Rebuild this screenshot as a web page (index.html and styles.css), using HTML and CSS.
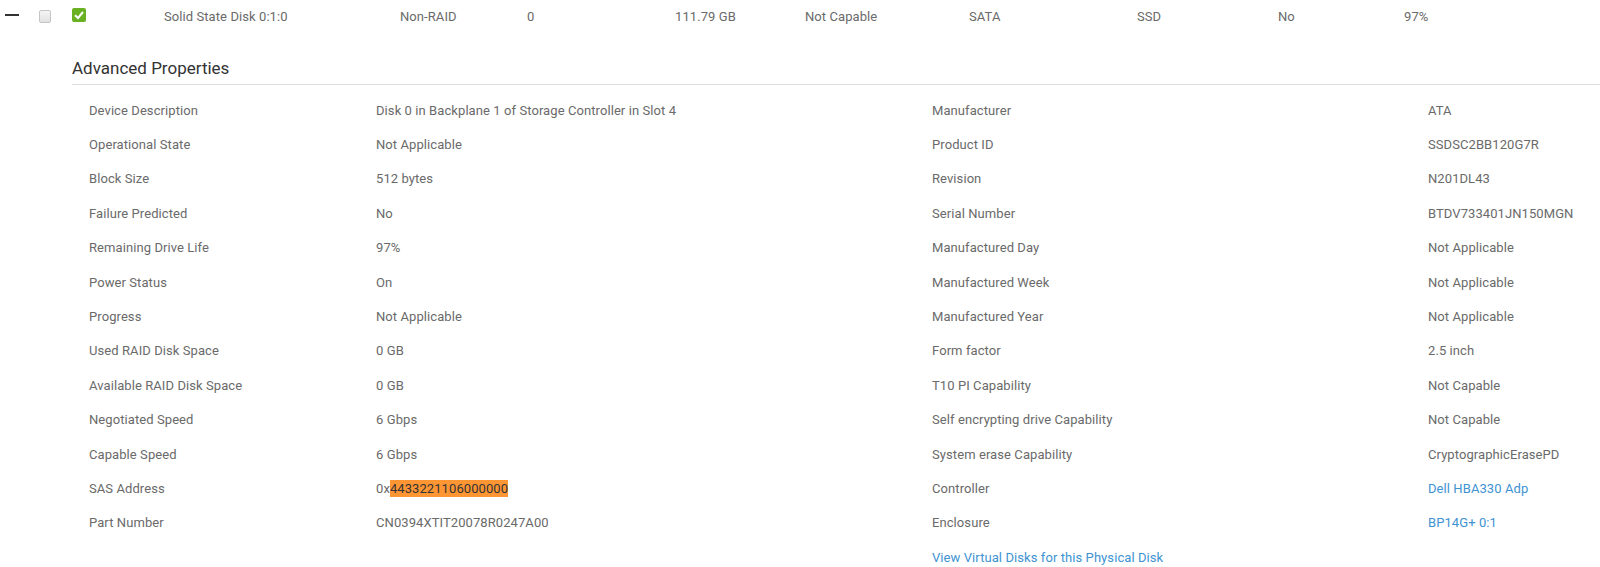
FILE: index.html
```html
<!DOCTYPE html>
<html>
<head>
<meta charset="utf-8">
<link rel="stylesheet" href="styles.css">
</head>
<body>
<div class="disk-row">
  <span class="cell"><span class="collapse"></span></span>
  <span class="cell"><span class="cb"></span></span>
  <span class="cell"><span class="ok"><svg width="14" height="14" viewBox="0 0 14 14"><path d="M3 7.2 L6 10 L11 4" fill="none" stroke="#fff" stroke-width="2"/></svg></span></span>
  <span class="cell">Solid State Disk 0:1:0</span>
  <span class="cell">Non-RAID</span>
  <span class="cell">0</span>
  <span class="cell">111.79 GB</span>
  <span class="cell">Not Capable</span>
  <span class="cell">SATA</span>
  <span class="cell">SSD</span>
  <span class="cell">No</span>
  <span class="cell">97%</span>
</div>
<section class="adv">
  <h2 class="adv-title">Advanced Properties</h2>
  <div class="props">
    <div class="k">Device Description</div><div class="v">Disk 0 in Backplane 1 of Storage Controller in Slot 4</div><div class="k">Manufacturer</div><div class="v">ATA</div>
    <div class="k">Operational State</div><div class="v">Not Applicable</div><div class="k">Product ID</div><div class="v">SSDSC2BB120G7R</div>
    <div class="k">Block Size</div><div class="v">512 bytes</div><div class="k">Revision</div><div class="v">N201DL43</div>
    <div class="k">Failure Predicted</div><div class="v">No</div><div class="k">Serial Number</div><div class="v">BTDV733401JN150MGN</div>
    <div class="k">Remaining Drive Life</div><div class="v">97%</div><div class="k">Manufactured Day</div><div class="v">Not Applicable</div>
    <div class="k">Power Status</div><div class="v">On</div><div class="k">Manufactured Week</div><div class="v">Not Applicable</div>
    <div class="k">Progress</div><div class="v">Not Applicable</div><div class="k">Manufactured Year</div><div class="v">Not Applicable</div>
    <div class="k">Used RAID Disk Space</div><div class="v">0 GB</div><div class="k">Form factor</div><div class="v">2.5 inch</div>
    <div class="k">Available RAID Disk Space</div><div class="v">0 GB</div><div class="k">T10 PI Capability</div><div class="v">Not Capable</div>
    <div class="k">Negotiated Speed</div><div class="v">6 Gbps</div><div class="k">Self encrypting drive Capability</div><div class="v">Not Capable</div>
    <div class="k">Capable Speed</div><div class="v">6 Gbps</div><div class="k">System erase Capability</div><div class="v">CryptographicErasePD</div>
    <div class="k">SAS Address</div><div class="v">0x<mark class="hl">4433221106000000</mark></div><div class="k">Controller</div><div class="v"><a class="link" href="#">Dell HBA330 Adp</a></div>
    <div class="k">Part Number</div><div class="v">CN0394XTIT20078R0247A00</div><div class="k">Enclosure</div><div class="v"><a class="link" href="#">BP14G+ 0:1</a></div>
    <div class="k"></div><div class="v"></div><div class="k"><a class="link" href="#">View Virtual Disks for this Physical Disk</a></div><div class="v"></div>
  </div>
</section>
</body>
</html>
```
FILE: styles.css
```css
html, body {
  margin: 0;
  padding: 0;
  background: #fff;
  font-family: Roboto, "Liberation Sans", sans-serif;
  font-size: 13px;
  letter-spacing: 0.08px;
  color: #6a6a6a;
}
.disk-row {
  display: grid;
  grid-template-columns: 34px 33px 92px 236px 127px 148px 130px 164px 168px 141px 126px 1fr;
  align-items: center;
  height: 32px;
  padding-left: 5px;
}
.cell {
  display: flex;
  align-items: center;
  white-space: nowrap;
}
.collapse {
  display: block;
  width: 14px;
  height: 2px;
  background: #333;
  margin-top: -2px;
}
.cb {
  display: block;
  width: 10px;
  height: 11px;
  border: 1px solid #c4c4c4;
  border-radius: 2px;
  background: linear-gradient(#f4f4f4, #e2e2e2);
}
.ok {
  display: flex;
  width: 14px;
  height: 14px;
  background: #6ab023;
  border-radius: 2px;
  margin-top: -3px;
}
.adv {
  padding-left: 72px;
}
.adv-title {
  margin: 0;
  font-size: 17px;
  font-weight: 400;
  letter-spacing: 0;
  color: #333;
  line-height: 22px;
  padding: 25px 0 5px;
  border-bottom: 1px solid #ddd;
}
.props {
  display: grid;
  grid-template-columns: 287px 556px 496px 1fr;
  grid-auto-rows: 34.4px;
  align-items: center;
  padding-left: 17px;
  margin-top: 8px;
}
.k, .v {
  white-space: nowrap;
}
.hl {
  background: #ff9633;
  color: #333;
  padding: 1px 0;
}
.link {
  color: #4093d2;
  text-decoration: none;
}
```
